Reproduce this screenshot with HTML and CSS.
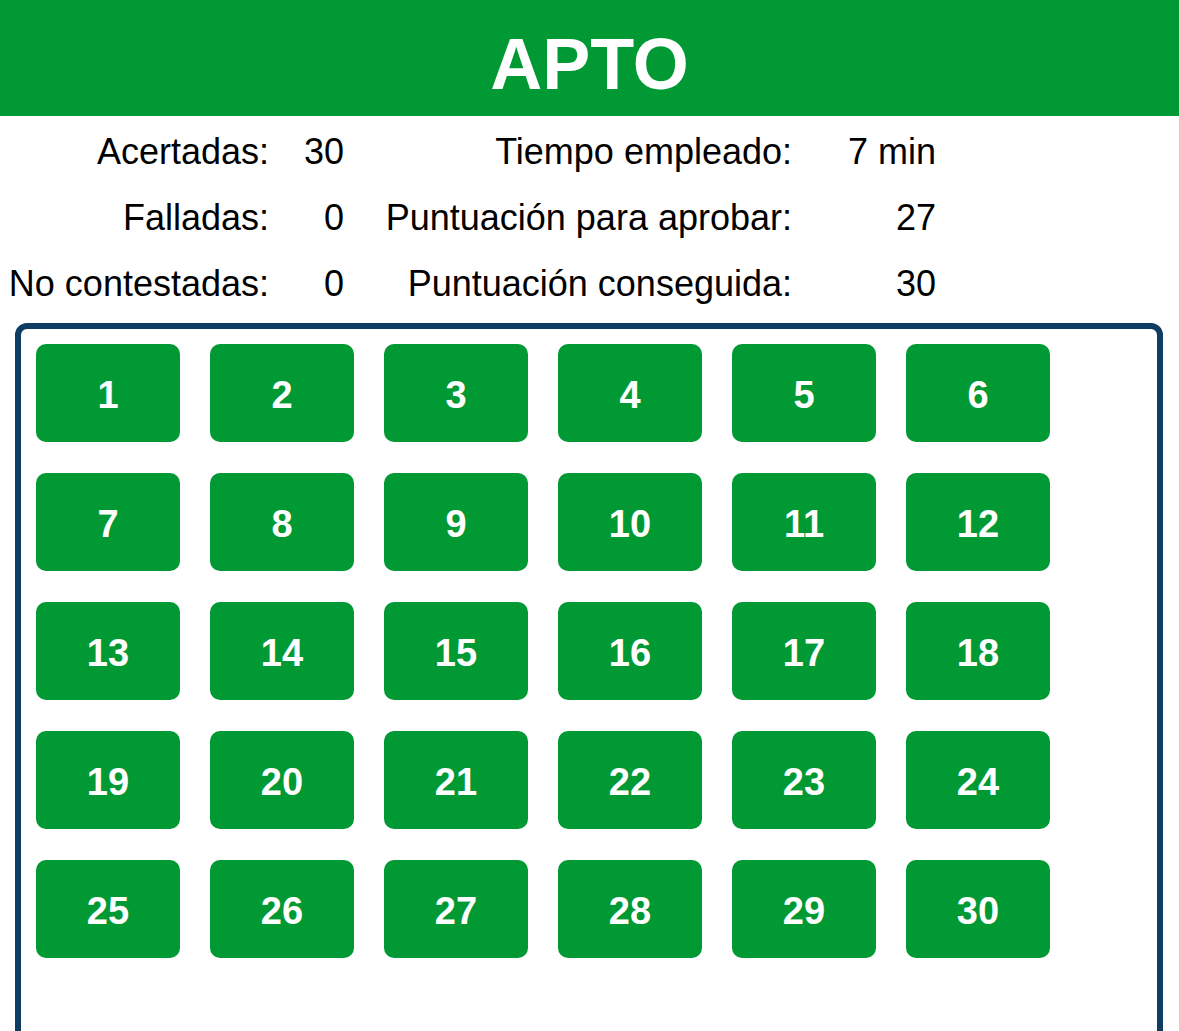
FILE: index.html
```html
<!DOCTYPE html>
<html lang="es">
<head>
<meta charset="utf-8">
<title>Resultado</title>
<link rel="stylesheet" href="styles.css">
</head>
<body>
<header class="banner">APTO</header>
<section class="stats">
  <div class="label">Acertadas:</div><div class="value">30</div>
  <div class="label">Tiempo empleado:</div><div class="value">7 min</div>
  <div class="label">Falladas:</div><div class="value">0</div>
  <div class="label">Puntuación para aprobar:</div><div class="value">27</div>
  <div class="label">No contestadas:</div><div class="value">0</div>
  <div class="label">Puntuación conseguida:</div><div class="value">30</div>
</section>
<section class="panel">
  <div class="grid">
    <button class="q">1</button><button class="q">2</button><button class="q">3</button><button class="q">4</button><button class="q">5</button><button class="q">6</button>
    <button class="q">7</button><button class="q">8</button><button class="q">9</button><button class="q">10</button><button class="q">11</button><button class="q">12</button>
    <button class="q">13</button><button class="q">14</button><button class="q">15</button><button class="q">16</button><button class="q">17</button><button class="q">18</button>
    <button class="q">19</button><button class="q">20</button><button class="q">21</button><button class="q">22</button><button class="q">23</button><button class="q">24</button>
    <button class="q">25</button><button class="q">26</button><button class="q">27</button><button class="q">28</button><button class="q">29</button><button class="q">30</button>
  </div>
</section>
</body>
</html>
```
FILE: styles.css
```css
html, body {
  margin: 0;
  padding: 0;
  background: #ffffff;
  font-family: "Liberation Sans", Arial, Helvetica, sans-serif;
  color: #000000;
}

.banner {
  height: 116px;
  background: #009933;
  color: #ffffff;
  font-weight: bold;
  font-size: 72px;
  line-height: 128px;
  text-align: center;
  box-sizing: border-box;
  overflow: hidden;
}

.stats {
  display: grid;
  grid-template-columns: 269px 75px 448px 144px;
  grid-auto-rows: 66px;
  margin-top: 3px;
  font-size: 36px;
  line-height: 66px;
}

.label,
.value {
  text-align: right;
  white-space: nowrap;
}

.panel {
  margin: 6px 0 0 15px;
  width: 1148px;
  box-sizing: border-box;
  border: 6px solid #0f3d61;
  border-radius: 12px;
  padding: 15px 15px 120px 15px;
}

.grid {
  display: grid;
  grid-template-columns: repeat(6, 144px);
  grid-auto-rows: 98px;
  column-gap: 30px;
  row-gap: 31px;
}

.q {
  margin: 0;
  border: none;
  border-radius: 10px;
  background: #009933;
  color: #ffffff;
  font-family: "Liberation Sans", Arial, Helvetica, sans-serif;
  font-weight: bold;
  font-size: 38px;
  padding: 5px 0 0 0;
  cursor: pointer;
}
```
